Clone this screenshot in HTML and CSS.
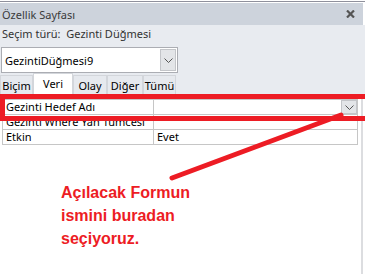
FILE: index.html
```html
<!DOCTYPE html>
<html lang="tr">
<head>
<meta charset="utf-8">
<link rel="stylesheet" href="styles.css">
</head>
<body>
<div class="panel">
  <div class="topline"></div>
  <div class="titlebar">
    <span class="title">Özellik Sayfası</span>
    <svg class="close" width="9" height="8" viewBox="0 0 9 8"><path d="M1 0.5 L8 7.5 M8 0.5 L1 7.5" stroke="#555" stroke-width="2.2"/></svg>
  </div>
  <div class="head">
    <div class="seltype">Seçim türü:&nbsp; Gezinti Düğmesi</div>
    <div class="combo">
      <span class="combo-text">GezintiDüğmesi9</span>
      <span class="combo-btn"><svg width="9" height="5" viewBox="0 0 9 5"><path d="M0.5 0.5 L4.5 4.5 L8.5 0.5" fill="none" stroke="#555" stroke-width="1"/></svg></span>
    </div>
    <div class="tabs">
      <span class="tab t1">Biçim</span>
      <span class="tab active t2">Veri</span>
      <span class="tab t3">Olay</span>
      <span class="tab t4">Diğer</span>
      <span class="tab t5">Tümü</span>
    </div>
  </div>
  <div class="lower">
    <table class="grid">
      <tr>
        <td class="lbl">Gezinti Hedef Adı</td>
        <td class="val"><span class="cell-btn"><svg width="9" height="5" viewBox="0 0 9 5"><path d="M0.5 0.5 L4.5 4.5 L8.5 0.5" fill="none" stroke="#555" stroke-width="1"/></svg></span></td>
      </tr>
      <tr>
        <td class="lbl">Gezinti Where Yan Tümcesi</td>
        <td class="val"></td>
      </tr>
      <tr>
        <td class="lbl">Etkin</td>
        <td class="val">Evet</td>
      </tr>
    </table>
    <p class="note">Açılacak Formun<br>ismini buradan<br>seçiyoruz.</p>
  </div>
</div>
<div class="redbox"></div>
<svg class="arrow" width="365" height="274" viewBox="0 0 365 274"><line x1="172" y1="178" x2="341" y2="115" stroke="#ed1c24" stroke-width="5" stroke-linecap="round"/></svg>
</body>
</html>
```

FILE: styles.css
```css
html, body {
  margin: 0;
  padding: 0;
  background: #ffffff;
}
body {
  width: 365px;
  height: 274px;
  overflow: hidden;
  position: relative;
  font-family: "Noto Sans", "Open Sans", sans-serif;
  font-size: 11px;
  color: #000;
}
.panel {
  display: flex;
  flex-direction: column;
  height: 274px;
}
.topline {
  height: 1px;
  margin-top: 1px;
  background: #8f909c;
}
.titlebar {
  height: 22px;
  margin-top: 1px;
  margin-right: 2px;
  background: #cdd3dc;
  display: flex;
  align-items: center;
  justify-content: space-between;
  padding: 0 8px 0 2px;
}
.title {
  font-size: 11px;
  color: #3a3a3a;
}
.close {
  display: block;
}
.head {
  background: #e8ebf0;
  display: flex;
  flex-direction: column;
  padding-top: 1px;
}
.seltype {
  height: 16px;
  line-height: 16px;
  padding-left: 2px;
  color: #333;
}
.combo {
  margin-top: 5px;
  margin-left: 1px;
  width: 175px;
  height: 24px;
  border: 1px solid #abadb3;
  background: #fff;
  display: flex;
  align-items: center;
  justify-content: space-between;
}
.combo-text {
  padding-left: 3px;
}
.combo-btn {
  width: 16px;
  height: 22px;
  margin-right: 1px;
  background: #e3e5e8;
  border: 1px solid #c3c5c9;
  box-sizing: border-box;
  display: flex;
  align-items: center;
  justify-content: center;
}
.combo-btn svg, .cell-btn svg { display: block; }
.tabs {
  display: flex;
  align-items: flex-end;
  height: 22px;
}
.tab {
  box-sizing: border-box;
  height: 19px;
  margin-bottom: 1px;
  border: 1px solid #d3d6db;
  border-bottom: none;
  background: #e6e9ee;
  display: flex;
  align-items: center;
  justify-content: center;
}
.tab.active {
  height: 22px;
  margin-bottom: 0;
  background: #fff;
  align-items: flex-start;
  padding-top: 2px;
}
.t1 { width: 33px; }
.t2 { width: 40px; }
.t3 { width: 34px; }
.t4 { width: 36px; }
.t5 { width: 33px; }
.lower {
  flex: 1;
  background: #fff;
  width: 361px;
  border-right: 2px solid #dcdde0;
  padding-top: 4px;
}
.grid {
  margin-left: 2px;
  width: 356px;
  border-collapse: collapse;
  table-layout: fixed;
}
.grid td {
  height: 14px;
  padding: 0 0 0 3px;
  border: 1px solid #c6c6c6;
  line-height: 14px;
  white-space: nowrap;
  overflow: hidden;
  position: relative;
}
.grid td.lbl { width: 147px; }
.cell-btn {
  position: absolute;
  right: 0;
  top: 0;
  width: 16px;
  height: 14px;
  box-sizing: border-box;
  background: #e3e5e8;
  border: 1px solid #c3c5c9;
  display: flex;
  align-items: center;
  justify-content: center;
}
.note {
  margin: 36px 0 0 61px;
  font-family: "Liberation Sans", Arial, sans-serif;
  font-weight: bold;
  font-size: 16px;
  line-height: 23px;
  color: #ed1c24;
}
.redbox {
  position: absolute;
  left: 0;
  top: 94px;
  width: 360px;
  height: 17px;
  border: 5px solid #ed1c24;
  border-right: none;
}
.arrow {
  position: absolute;
  left: 0;
  top: 0;
  pointer-events: none;
}
```
